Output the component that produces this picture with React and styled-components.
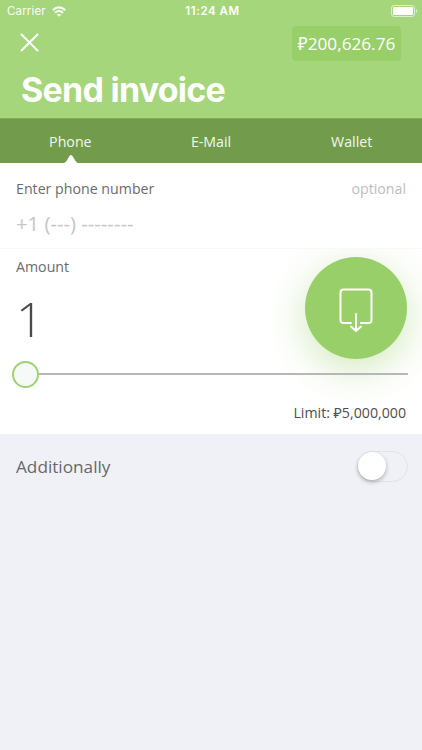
import React from "react"
import styled, { createGlobalStyle } from "styled-components"

const GlobalStyle = createGlobalStyle`
  * {
    box-sizing: border-box;
  }

  body {
    margin: 0;
    background: #eff1f6;
    font-family: "Open Sans", "Noto Sans", sans-serif;
    color: #686868;
  }
`

const Screen = styled.main`
  width: 422px;
  height: 750px;
  overflow: hidden;
  background: #eff1f6;
`

const Header = styled.header`
  height: 118px;
  background: #a6d67c;
  color: #fff;
`

const StatusBar = styled.div`
  display: grid;
  grid-template-columns: 1fr auto 1fr;
  align-items: center;
  height: 22px;
  padding: 0 4px 0 7px;
  font-family: Inter, sans-serif;
  font-size: 11.5px;
`

const Carrier = styled.div`
  display: flex;
  align-items: center;
  gap: 6px;
  letter-spacing: 0.15px;
  opacity: 0.95;
`

const Time = styled.div`
  font-weight: 600;
  letter-spacing: 0.55px;
`

const Battery = styled.svg`
  justify-self: end;
`

const TopRow = styled.div`
  display: flex;
  align-items: center;
  justify-content: space-between;
  height: 42px;
  padding: 0 21px 0 20px;
`

const CloseButton = styled.button`
  display: flex;
  margin-bottom: 2px;
  padding: 0;
  border: 0;
  background: none;
`

const Balance = styled.div`
  width: 109px;
  height: 35px;
  border-radius: 4px;
  background: #98cf68;
  font-size: 17.2px;
  line-height: 35px;
  text-align: center;
  white-space: nowrap;
`

const Title = styled.h1`
  margin: 5px 0 0 21px;
  font-family: Inter, sans-serif;
  font-size: 34px;
  font-weight: 700;
  letter-spacing: -0.75px;
  line-height: 42px;
`

const Tabs = styled.nav`
  display: flex;
  height: 45px;
  border-top: 1px solid #82ac5b;
  background: #729c4c;
`

const Tab = styled.button`
  position: relative;
  flex: 1;
  padding: 1px 0 0;
  border: 0;
  background: none;
  color: #f3f9ee;
  font: inherit;
  font-size: 14.2px;
`

const Pointer = styled.svg`
  position: absolute;
  bottom: 0;
  left: 50%;
  margin-left: 0.5px;
  transform: translateX(-50%);
`

const PhoneSection = styled.section`
  height: 86px;
  padding: 16px 16px 0;
  border-bottom: 1px solid #f8f8f8;
  background: #fff;
`

const LabelRow = styled.div`
  display: flex;
  justify-content: space-between;
`

const Label = styled.div`
  font-size: 14.2px;
  line-height: 20px;
  color: ${({ $muted }) => ($muted ? "#bdbdbd" : "#6b6b6b")};
`

const PhoneInput = styled.div`
  margin-top: 10px;
  color: #c5c5ca;
  font-size: 20.3px;
  line-height: 29px;
`

const AmountSection = styled.section`
  height: 185px;
  padding: 8px 14px 0 16px;
  background: #fff;
  overflow: hidden;
`

const AmountRow = styled.div`
  display: flex;
  justify-content: space-between;
  height: 102px;
`

const Amount = styled.div`
  margin-top: 11px;
  color: #4a4a4a;
  font-size: 48.5px;
  font-weight: 300;
  line-height: 60px;
`

const SendButton = styled.button`
  display: flex;
  align-items: center;
  justify-content: center;
  width: 102px;
  height: 102px;
  margin-right: 1.5px;
  padding: 3px 0 0;
  border: 0;
  border-radius: 50%;
  background: #98cf68;
  box-shadow: 0 10px 38px rgba(152, 207, 104, 0.45);
`

const Slider = styled.div`
  display: flex;
  align-items: center;
  height: 28px;
  margin: 1px 0 0 -4px;
`

const Thumb = styled.div`
  width: 27px;
  height: 27px;
  border: 2px solid #9dd173;
  border-radius: 50%;
  background: #f5faf7;
`

const Track = styled.div`
  flex: 1;
  height: 2px;
  background: #b7b7b7;
`

const Limit = styled.div`
  margin: 15px 2px 0 0;
  color: #4e4e4e;
  font-size: 14.2px;
  line-height: 20px;
  text-align: right;
`

const OptionRow = styled.div`
  display: flex;
  align-items: center;
  justify-content: space-between;
  height: 64px;
  padding: 0 14px 0 16px;
  font-size: 17.2px;
`

const Switch = styled.div`
  width: 51px;
  height: 31px;
  border: 1px solid #e2e3e6;
  border-radius: 16px;
`

const Knob = styled.div`
  width: 28px;
  height: 28px;
  border-radius: 50%;
  background: #fff;
  box-shadow: 0 2px 4px rgba(0, 0, 0, 0.28);
`

const WifiIcon = () => (
  <svg width="14" height="11" viewBox="0 0 14 11" fill="none" stroke="#fff" strokeWidth="2.1">
    <path d="M.8 4.1Q7-1.4 13.2 4.1" />
    <path d="M3 6.7Q7 3.3 11 6.7" />
    <path d="M4.7 8.5Q7 6.8 9.3 8.5L7 10.8Z" fill="#fff" stroke="none" />
  </svg>
)

const BatteryIcon = () => (
  <Battery width="27" height="12" viewBox="0 0 27 12">
    <rect x=".5" y=".5" width="23" height="11" rx="2.5" fill="none" stroke="#fff" opacity=".6" />
    <rect x="2" y="2" width="20" height="8" rx="1" fill="#fff" />
    <path d="M25 4Q27.5 6 25 8Z" fill="#fff" opacity=".6" />
  </Battery>
)

const CloseIcon = () => (
  <svg width="19" height="19" viewBox="0 0 19 19" stroke="#fff" strokeWidth="1.9" strokeLinecap="round">
    <path d="M1.5 1.5L17.5 17.5M17.5 1.5L1.5 17.5" />
  </svg>
)

const ReceiveIcon = () => (
  <svg
    width="34"
    height="44"
    viewBox="0 0 34 44"
    fill="none"
    stroke="#fff"
    strokeWidth="2"
    strokeLinecap="round"
    strokeLinejoin="round"
  >
    <path d="M12 35H4.5Q1.5 35 1.5 32V4.5Q1.5 1.5 4.5 1.5H29.5Q32.5 1.5 32.5 4.5V32Q32.5 35 29.5 35H22" />
    <path d="M17 26V43M12 38.5L17 43L22 38.5" />
  </svg>
)

const tabs = ["Phone", "E-Mail", "Wallet"]

export default () => (
  <Screen>
    <GlobalStyle />
    <Header>
      <StatusBar>
        <Carrier>
          Carrier <WifiIcon />
        </Carrier>
        <Time>11:24 AM</Time>
        <BatteryIcon />
      </StatusBar>
      <TopRow>
        <CloseButton aria-label="Close">
          <CloseIcon />
        </CloseButton>
        <Balance>₽200,626.76</Balance>
      </TopRow>
      <Title>Send invoice</Title>
    </Header>
    <Tabs>
      {tabs.map((tab, i) => (
        <Tab key={tab}>
          {tab}
          {i === 0 && (
            <Pointer width="14" height="8" viewBox="0 0 14 8">
              <path d="M0 8Q1.5 7.5 2.5 6L5.5 1Q7-.8 8.5 1L11.5 6Q12.5 7.5 14 8Z" fill="#fff" />
            </Pointer>
          )}
        </Tab>
      ))}
    </Tabs>
    <PhoneSection>
      <LabelRow>
        <Label>Enter phone number</Label>
        <Label $muted>optional</Label>
      </LabelRow>
      <PhoneInput>+1 (---) --------</PhoneInput>
    </PhoneSection>
    <AmountSection>
      <AmountRow>
        <div>
          <Label>Amount</Label>
          <Amount>1</Amount>
        </div>
        <SendButton aria-label="Send invoice">
          <ReceiveIcon />
        </SendButton>
      </AmountRow>
      <Slider>
        <Thumb />
        <Track />
      </Slider>
      <Limit>Limit: ₽5,000,000</Limit>
    </AmountSection>
    <OptionRow>
      Additionally
      <Switch>
        <Knob />
      </Switch>
    </OptionRow>
  </Screen>
)
